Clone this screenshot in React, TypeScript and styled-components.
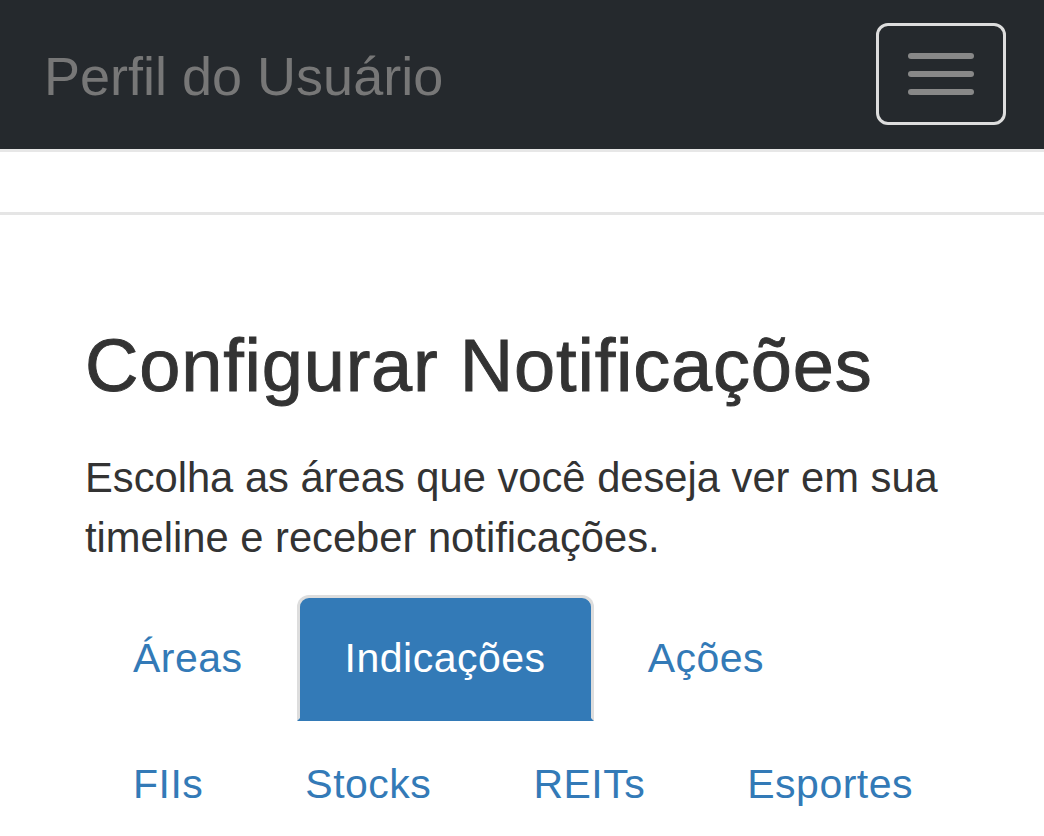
import styled, { createGlobalStyle } from 'styled-components';

const GlobalStyle = createGlobalStyle`
  html, body {
    margin: 0;
    padding: 0;
    background: #fff;
  }
  body {
    font-family: "Liberation Sans", Arial, Helvetica, sans-serif;
    color: #333;
  }
  * {
    box-sizing: border-box;
  }
`;

const Navbar = styled.nav`
  height: 152px;
  background: #25292d;
  border-bottom: 3px solid #e7e7e7;
  display: flex;
  align-items: flex-start;
  justify-content: space-between;
  padding: 0 38px 0 44px;
`;

const Brand = styled.a`
  font-size: 54px;
  line-height: 60px;
  padding-top: 46px;
  color: #777;
  text-decoration: none;
`;

const Toggle = styled.button`
  margin-top: 23px;
  width: 130px;
  height: 102px;
  background: transparent;
  border: 3px solid #ddd;
  border-radius: 12px;
  display: flex;
  flex-direction: column;
  align-items: center;
  justify-content: center;
  gap: 12px;
  padding: 0;
  cursor: pointer;
`;

const IconBar = styled.span`
  display: block;
  width: 66px;
  height: 6px;
  border-radius: 3px;
  background: #888;
`;

const SubBar = styled.div`
  height: 63px;
  border-bottom: 3px solid #e5e5e5;
`;

const Content = styled.main`
  padding: 110px 40px 0 85px;
`;

const Title = styled.h3`
  margin: 0 0 42px;
  font-size: 74px;
  line-height: 1.1;
  font-weight: 500;
  letter-spacing: 0.8px;
  color: #333;
  -webkit-text-stroke: 0.9px #333;
`;

const Lead = styled.p`
  margin: 0 0 27px;
  max-width: 872px;
  font-size: 41.7px;
  line-height: 60px;
  color: #333;
`;

const Tabs = styled.ul`
  list-style: none;
  margin: 0;
  padding: 0;
  display: flex;
  flex-wrap: wrap;
`;

const Tab = styled.li<{ $active?: boolean }>`
  margin-right: 6px;
  padding: 30px 45px;
  font-size: 41px;
  line-height: 60px;
  letter-spacing: 0.5px;
  white-space: nowrap;
  border: 3px solid ${p => (p.$active ? '#ddd' : 'transparent')};
  border-bottom-color: transparent;
  border-radius: 12px 12px 0 0;
  background: ${p => (p.$active ? '#337ab7' : 'transparent')};
  color: ${p => (p.$active ? '#fff' : '#337ab7')};
  cursor: pointer;
`;

const TabBreak = styled.li`
  flex-basis: 100%;
  height: 0;
`;

const rowOne = ['Áreas', 'Indicações', 'Ações'];
const rowTwo = ['FIIs', 'Stocks', 'REITs', 'Esportes'];

export default function App() {
  return (
    <>
      <GlobalStyle />
      <Navbar>
        <Brand href="#">Perfil do Usuário</Brand>
        <Toggle aria-label="Menu">
          <IconBar />
          <IconBar />
          <IconBar />
        </Toggle>
      </Navbar>
      <SubBar />
      <Content>
        <Title>Configurar Notificações</Title>
        <Lead>Escolha as áreas que você deseja ver em sua timeline e receber notificações.</Lead>
        <Tabs>
          {rowOne.map(t => (
            <Tab key={t} $active={t === 'Indicações'}>{t}</Tab>
          ))}
          <TabBreak />
          {rowTwo.map(t => (
            <Tab key={t}>{t}</Tab>
          ))}
        </Tabs>
      </Content>
    </>
  );
}
